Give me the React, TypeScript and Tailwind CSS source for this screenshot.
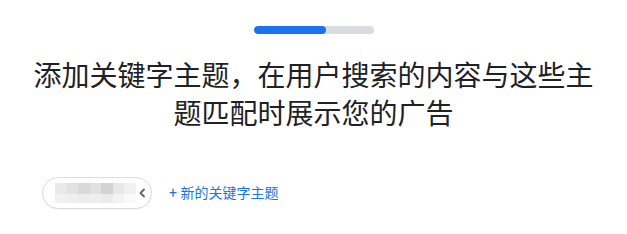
const mosaicTop = ['#e9e9e9', '#e2e2e2', '#d9d9d9', '#e1e1e1', '#d3d3d3', '#e7e7e7', '#f1f1f1'];
const mosaicBottom = ['#f1f1f1', '#efefef', '#ececec', '#eeeeee', '#ebebeb', '#f3f3f3', '#fafafa'];

function BlurredChip() {
  return (
    <div className="flex h-[32px] w-[110px] items-center rounded-full border border-[#dadce0] bg-white pl-[12px] pr-[4px] shadow-[0_1px_1px_rgba(0,0,0,0.04)]">
      <div className="flex flex-col">
        <div className="flex">
          {mosaicTop.map((c, i) => (
            <div key={i} className="h-[11px] w-[11.5px]" style={{ backgroundColor: c }} />
          ))}
        </div>
        <div className="flex">
          {mosaicBottom.map((c, i) => (
            <div key={i} className="h-[9px] w-[11.5px]" style={{ backgroundColor: c }} />
          ))}
        </div>
      </div>
      <svg className="ml-auto h-[12px] w-[12px] shrink-0" viewBox="0 0 12 12" fill="none">
        <path d="M8 2.5 4.5 6 8 9.5" stroke="#5f6368" strokeWidth="1.8" strokeLinecap="round" strokeLinejoin="round" />
      </svg>
    </div>
  );
}

export default function App() {
  return (
    <div className="flex h-[234px] w-full flex-col items-center bg-white font-['Roboto','Noto_Sans_CJK_SC',sans-serif]">
      <div className="mt-[26px] h-[8px] w-[120px] overflow-hidden rounded-full bg-[#dadce0]">
        <div className="h-full w-[72px] rounded-full bg-[#1a73e8]" />
      </div>

      <h1 className="mt-[24px] w-[570px] text-center text-[28px] font-normal leading-[38px] text-[#202124]">
        添加关键字主题，在用户搜索的内容与这些主题匹配时展示您的广告
      </h1>

      <div className="mt-[43px] flex w-full items-center gap-[17px] pl-[42px]">
        <BlurredChip />
        <button className="text-[14px] leading-[16px] text-[#1a73e8]">+ 新的关键字主题</button>
      </div>
    </div>
  );
}
